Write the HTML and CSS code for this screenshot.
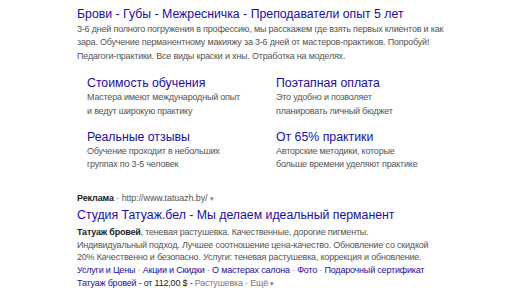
FILE: index.html
```html
<!DOCTYPE html>
<html lang="ru">

<head>
    <meta charset="UTF-8">
    <meta name="viewport" content="width=device-width, initial-scale=1.0">
    <title>Реклама</title>
    <link rel="stylesheet" href="styles.css">
</head>

<body>

    <div class="ad">
        <a class="ad-title" href="#">Брови - Губы - Межресничка - Преподаватели опыт 5 лет</a>
        <p class="ad-desc">3-6 дней полного погружения в профессию, мы расскажем где взять первых клиентов и как зара. Обучение перманентному макияжу за 3-6 дней от мастеров-практиков. Попробуй! Педагоги-практики. Все виды краски и хны. Отработка на моделях.</p>

        <!-- Быстрые ссылки: у каждой две строки описания -->
        <div class="sitelinks">
            <div class="sitelink">
                <a class="sitelink-title" href="#">Стоимость обучения</a>
                <span class="sitelink-line">Мастера имеют международный опыт</span>
                <span class="sitelink-line">и ведут широкую практику</span>
            </div>
            <div class="sitelink">
                <a class="sitelink-title" href="#">Поэтапная оплата</a>
                <span class="sitelink-line">Это удобно и позволяет</span>
                <span class="sitelink-line">планировать личный бюджет</span>
            </div>
            <div class="sitelink">
                <a class="sitelink-title" href="#">Реальные отзывы</a>
                <span class="sitelink-line">Обучение проходит в небольших</span>
                <span class="sitelink-line">группах по 3-5 человек</span>
            </div>
            <div class="sitelink">
                <a class="sitelink-title" href="#">От 65% практики</a>
                <span class="sitelink-line">Авторские методики, которые</span>
                <span class="sitelink-line">больше времени уделяют практике</span>
            </div>
        </div>
    </div>

    <div class="ad ad-second">
        <div class="ad-url"><b>Реклама</b> · http://www.tatuazh.by/ <span class="caret">▾</span></div>
        <a class="ad-title" href="#">Студия Татуаж.бел - Мы делаем идеальный перманент</a>
        <p class="ad-desc">
            <span class="desc-line"><b class="dark">Татуаж бровей</b>, теневая растушевка. Качественные, дорогие пигменты.</span>
            <span class="desc-line">Индивидуальный подход. Лучшее соотношение цена-качество. Обновление со скидкой</span>
            <span class="desc-line">20% Качественно и безопасно. Услуги: теневая растушевка, коррекция и обновление.</span>
        </p>
        <div class="ad-links">
            <a href="#">Услуги и Цены</a> · <a href="#">Акции и Скидки</a> · <a href="#">О мастерах салона</a> · <a href="#">Фото</a> · <a href="#">Подарочный сертификат</a>
        </div>
        <div class="ad-price">
            <a href="#">Татуаж бровей</a> <span class="dark">- от 112,00 $ -</span> Растушевка · Ещё <span class="caret">▾</span>
        </div>
    </div>

</body>

</html>
```

FILE: styles.css
```css
body {
    font-family: 'Liberation Sans', Arial, sans-serif;
    background-color: #fff;
    margin: 0;
    padding: 0;
    color: #545454;
}

a {
    color: #1a0dab;
    text-decoration: none;
}

p {
    margin: 0;
}

.ad {
    width: 372px;
    padding: 5px 0 0 77px;
}

.ad-title {
    display: block;
    font-size: 12.3px;
    line-height: 18px;
}

.ad-desc {
    font-size: 9px;
    letter-spacing: -0.2px;
    line-height: 13.4px;
}

.desc-line {
    display: block;
    white-space: nowrap;
}

.dark {
    color: #222;
}

.sitelinks {
    display: grid;
    grid-template-columns: 189px 180px;
    row-gap: 11px;
    padding: 12px 0 0 10px;
}

.sitelink-title {
    display: block;
    font-size: 12.3px;
    line-height: 16px;
}

.sitelink-line {
    display: block;
    white-space: nowrap;
    font-size: 9px;
    letter-spacing: -0.2px;
    line-height: 13.4px;
}

.ad-second {
    padding-top: 20px;
}

.ad-url {
    font-size: 9px;
    letter-spacing: -0.1px;
    line-height: 13px;
    color: #545454;
}

.ad-url b {
    color: #222;
}

.caret {
    font-size: 7px;
    color: #777;
}

.ad-second .ad-title {
    line-height: 21px;
}

.ad-second .ad-desc {
    line-height: 12.8px;
}

.ad-links,
.ad-price {
    font-size: 9px;
    letter-spacing: -0.2px;
    line-height: 12.8px;
    color: #777;
}
```
